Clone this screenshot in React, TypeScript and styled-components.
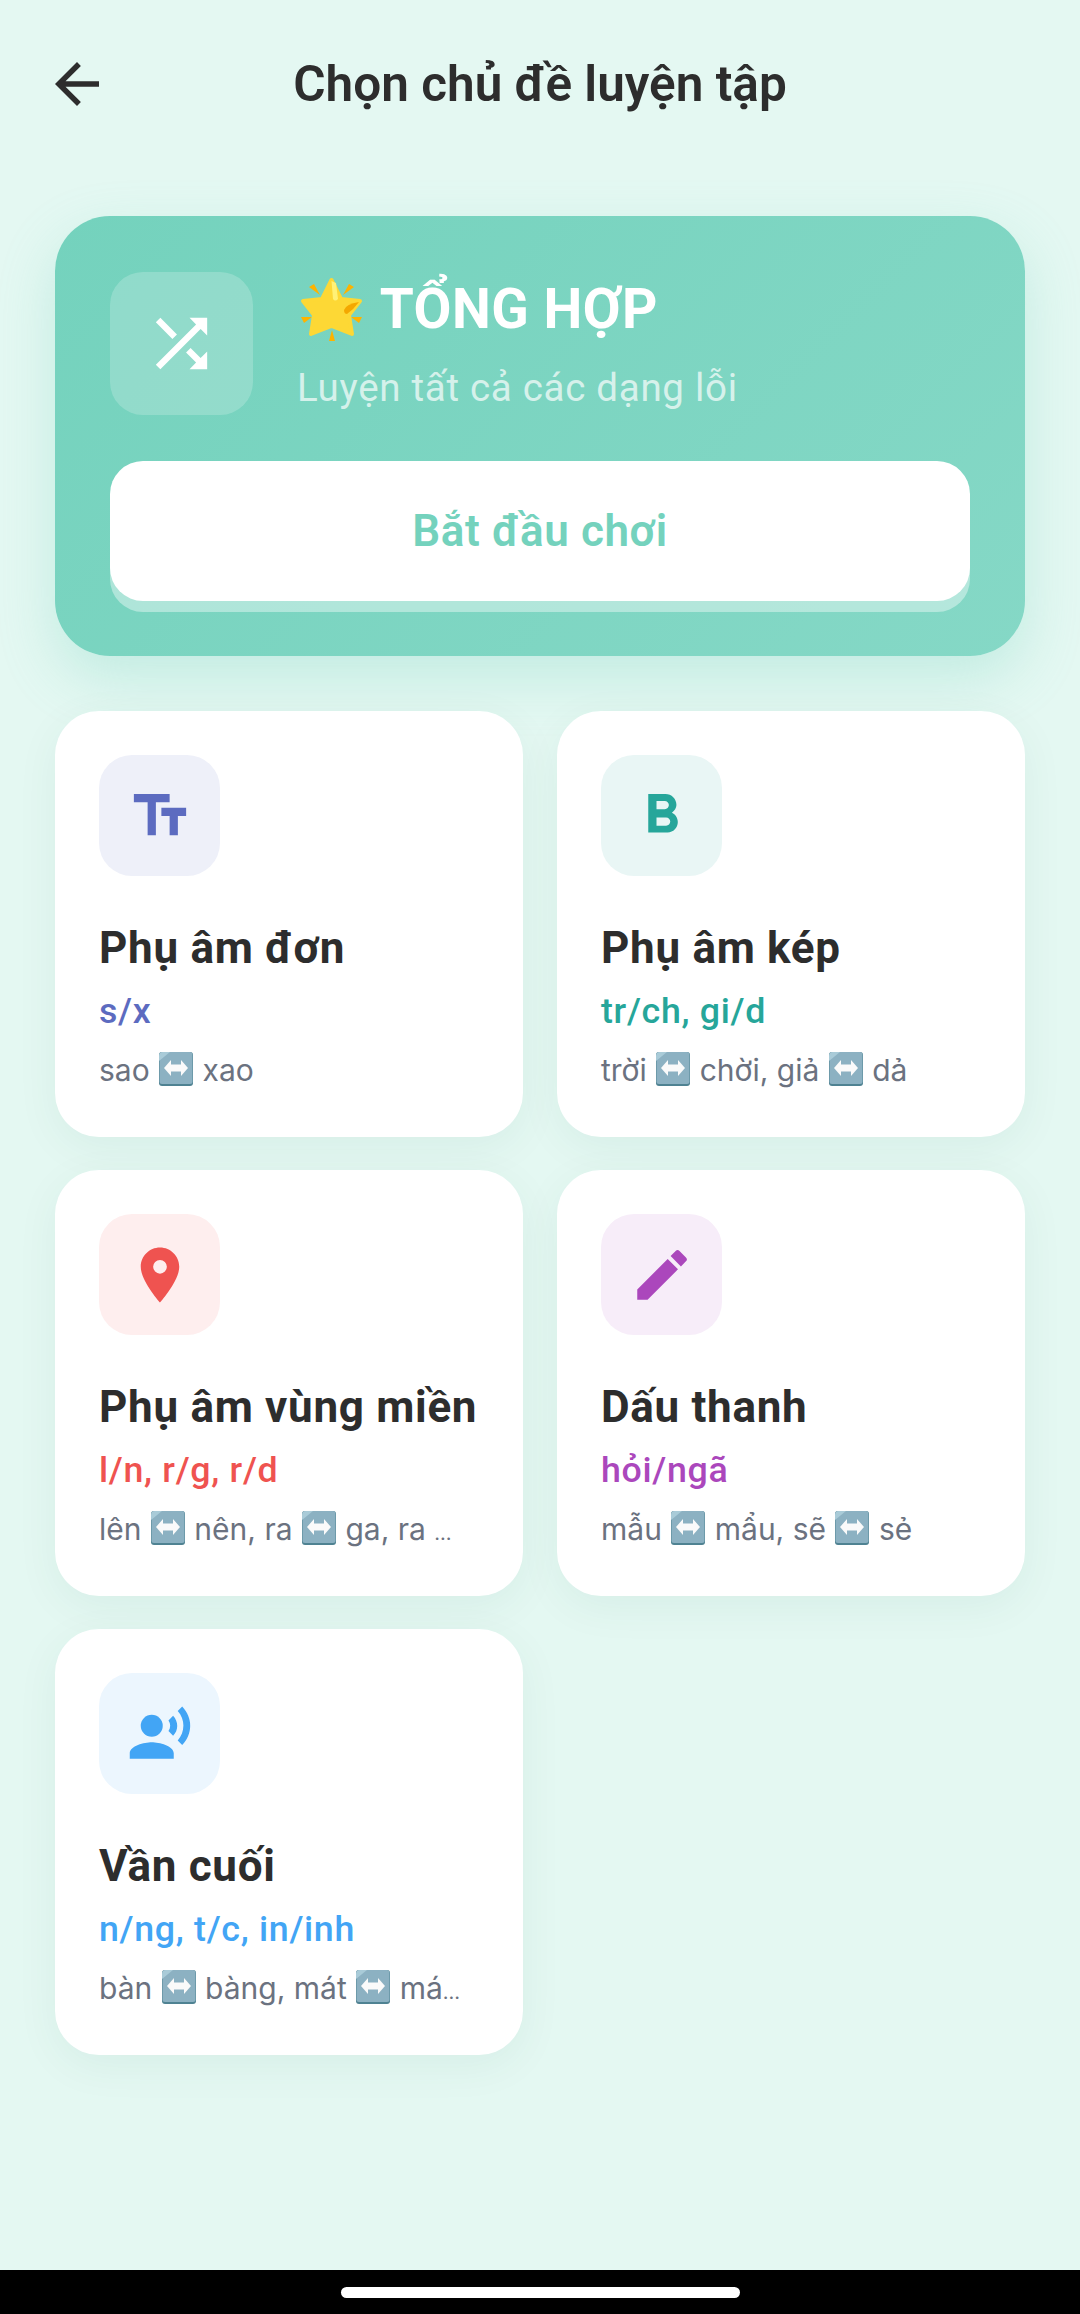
import React from 'react';
import styled, { createGlobalStyle } from 'styled-components';
import {
  MdArrowBack,
  MdEdit,
  MdFormatBold,
  MdLocationOn,
  MdRecordVoiceOver,
  MdShuffle,
  MdTextFields,
} from 'react-icons/md';

const GlobalStyle = createGlobalStyle`
  html, body {
    margin: 0;
    padding: 0;
    background: #e4f8f2;
  }
  * {
    box-sizing: border-box;
  }
`;

// used by the topics table below, so it has to exist before it
const Ellipsis = styled.span`
  font-size: 20px;
`;

const SwapGlyph = () => (
  <SwapIcon viewBox="0 0 34 34" aria-hidden="true">
    <rect x="0" y="0" width="34" height="34" rx="3" fill="#4f8292" />
    <rect x="0.5" y="0" width="33" height="32" rx="2.5" fill="#8cb1c2" />
    <path d="M0 4 Q0 0 4 0 H11 L0 9 Z" fill="#a9cbd8" />
    <path
      d="M5 16 L12 8 V12.5 H22 V8 L29 16 L22 24 V19.5 H12 V24 Z"
      fill="#fafafa"
    />
  </SwapIcon>
);

const GlowStar = () => (
  <StarIcon viewBox="0 0 64 66" aria-hidden="true">
    <g fill="#fdb300">
      <polygon points="9,11 14,8 20,19" />
      <polygon points="43,19 49,8 54,11" />
      <polygon points="1,41 12,41 4,47" />
      <polygon points="51,41 62,41 59,47" />
      <polygon points="29,65 35,65 32,54" />
    </g>
    <polygon
      points="31.5,4 41,23 60,25 49,39 52,58 31.5,50 11,58 14,39 3,25 22,23"
      fill="#fdd835"
      stroke="#fdd835"
      strokeWidth="4"
      strokeLinejoin="round"
    />
    <path d="M31.5 5 L36 7 L38 23 Q35 26 33 23 Z" fill="#fff176" />
    <path d="M44 34 Q46 28 59 26 Q54 33 47 38 Q44 38 44 34 Z" fill="#f4a800" />
  </StarIcon>
);

type Topic = {
  title: string;
  tag: string;
  color: string;
  tint: string;
  Icon: React.ComponentType<{ size?: number }>;
  example: React.ReactNode;
};

const topics: Topic[] = [
  {
    title: 'Phụ âm đơn',
    tag: 's/x',
    color: '#5c6bc0',
    tint: '#eef0f9',
    Icon: MdTextFields,
    example: (
      <>
        sao <SwapGlyph /> xao
      </>
    ),
  },
  {
    title: 'Phụ âm kép',
    tag: 'tr/ch, gi/d',
    color: '#26a69a',
    tint: '#e9f6f5',
    Icon: MdFormatBold,
    example: (
      <>
        trời <SwapGlyph /> chời, giả <SwapGlyph /> dả
      </>
    ),
  },
  {
    title: 'Phụ âm vùng miền',
    tag: 'l/n, r/g, r/d',
    color: '#ef5350',
    tint: '#feeeee',
    Icon: MdLocationOn,
    example: (
      <>
        lên <SwapGlyph /> nên, ra <SwapGlyph /> ga, ra <Ellipsis>…</Ellipsis>
      </>
    ),
  },
  {
    title: 'Dấu thanh',
    tag: 'hỏi/ngã',
    color: '#ab47bc',
    tint: '#f7edf9',
    Icon: MdEdit,
    example: (
      <>
        mẫu <SwapGlyph /> mẩu, sẽ <SwapGlyph /> sẻ
      </>
    ),
  },
  {
    title: 'Vần cuối',
    tag: 'n/ng, t/c, in/inh',
    color: '#42a5f5',
    tint: '#ecf6fe',
    Icon: MdRecordVoiceOver,
    example: (
      <>
        bàn <SwapGlyph /> bàng, mát <SwapGlyph /> má<Ellipsis>…</Ellipsis>
      </>
    ),
  },
];

const App = () => {
  return (
    <>
      <GlobalStyle />
      <Page>
        <Header>
          <BackButton>
            <MdArrowBack size={66} />
          </BackButton>
          <HeaderTitle>Chọn chủ đề luyện tập</HeaderTitle>
        </Header>

        <Content>
          <HeroCard>
            <HeroTop>
              <HeroTile>
                <MdShuffle size={77} />
              </HeroTile>
              <div>
                <HeroTitle>
                  <GlowStar /> TỔNG HỢP
                </HeroTitle>
                <HeroSub>Luyện tất cả các dạng lỗi</HeroSub>
              </div>
            </HeroTop>
            <StartButton>Bắt đầu chơi</StartButton>
          </HeroCard>

          <TopicGrid>
            {topics.map(({ title, tag, color, tint, Icon, example }) => (
              <TopicCard key={title}>
                <IconTile $tint={tint} $color={color}>
                  <Icon size={66} />
                </IconTile>
                <TopicTitle>{title}</TopicTitle>
                <TopicTag $color={color}>{tag}</TopicTag>
                <TopicExample>{example}</TopicExample>
              </TopicCard>
            ))}
          </TopicGrid>
        </Content>

        <NavBar>
          <HomeIndicator />
        </NavBar>
      </Page>
    </>
  );
};

export default App;

const Page = styled.div`
  width: 1080px;
  height: 2314px;
  display: flex;
  flex-direction: column;
  overflow: hidden;
  background: #e4f8f2;
  font-family: Roboto, 'Noto Sans', sans-serif;
`;

const Header = styled.header`
  position: relative;
  height: 168px;
  flex: none;
  display: flex;
  align-items: center;
  justify-content: center;
`;

const BackButton = styled.div`
  position: absolute;
  left: 44px;
  top: 51px;
  display: flex;
  color: #2d2d2d;
`;

const HeaderTitle = styled.h1`
  margin: 0;
  font-size: 49.5px;
  font-weight: 600;
  line-height: 64px;
  color: #2d2d2d;
`;

const Content = styled.main`
  flex: 1;
  padding: 48px 55px 0;
  display: flex;
  flex-direction: column;
  gap: 55px;
`;

const HeroCard = styled.section`
  height: 440px;
  border-radius: 55px;
  padding: 56px 55px 0;
  background: linear-gradient(135deg, #74d2bd, #85d8c6);
  box-shadow: 0 22px 55px rgba(116, 210, 189, 0.3);
`;

const HeroTop = styled.div`
  display: flex;
  gap: 44px;
`;

const HeroTile = styled.div`
  width: 143px;
  height: 143px;
  border-radius: 33px;
  display: flex;
  align-items: center;
  justify-content: center;
  background: rgba(255, 255, 255, 0.2);
  color: #ffffff;
`;

const HeroTitle = styled.div`
  margin-top: 1px;
  font-size: 55px;
  font-weight: 700;
  line-height: 72px;
  letter-spacing: 0.5px;
  color: #ffffff;
  white-space: nowrap;
`;

const StarIcon = styled.svg`
  width: 64px;
  height: 66px;
  margin: 0 3px 0 3px;
  vertical-align: -14px;
`;

const HeroSub = styled.div`
  margin-top: 18px;
  font-size: 38.5px;
  font-weight: 400;
  line-height: 50px;
  letter-spacing: 0.7px;
  color: rgba(255, 255, 255, 0.7);
`;

const StartButton = styled.div`
  margin-top: 46px;
  height: 140px;
  border-radius: 33px;
  display: flex;
  align-items: center;
  justify-content: center;
  background: #ffffff;
  box-shadow: 0 11px 0 rgba(255, 255, 255, 0.4);
  font-size: 44px;
  font-weight: 600;
  letter-spacing: 0.6px;
  color: #74d2bd;
`;

const TopicGrid = styled.div`
  display: grid;
  grid-template-columns: repeat(2, 468px);
  gap: 33px 34px;
`;

const TopicCard = styled.article`
  height: 426px;
  padding: 44px;
  border-radius: 44px;
  background: #ffffff;
  box-shadow: 0 11px 44px rgba(0, 80, 60, 0.06);
  overflow: hidden;
`;

const IconTile = styled.div<{ $tint: string; $color: string }>`
  width: 121px;
  height: 121px;
  border-radius: 33px;
  display: flex;
  align-items: center;
  justify-content: center;
  background: ${(p) => p.$tint};
  color: ${(p) => p.$color};
`;

const TopicTitle = styled.div`
  margin-top: 46px;
  font-size: 44px;
  font-weight: 700;
  line-height: 52px;
  letter-spacing: 0.7px;
  color: #2d2d2d;
  white-space: nowrap;
`;

const TopicTag = styled.div<{ $color: string }>`
  margin-top: 15px;
  font-size: 35.75px;
  font-weight: 500;
  line-height: 44px;
  letter-spacing: 0.7px;
  color: ${(p) => p.$color};
`;

const TopicExample = styled.div`
  margin-top: 17px;
  font-family: Inter, Roboto, sans-serif;
  font-size: 30px;
  line-height: 40px;
  color: #6b7280;
  white-space: nowrap;
`;

const SwapIcon = styled.svg`
  width: 34px;
  height: 34px;
  margin: 0 1px;
  vertical-align: -5px;
`;

const NavBar = styled.div`
  height: 44px;
  flex: none;
  display: flex;
  align-items: center;
  justify-content: center;
  background: #000000;
`;

const HomeIndicator = styled.div`
  width: 399px;
  height: 11px;
  border-radius: 6px;
  background: #ffffff;
`;
